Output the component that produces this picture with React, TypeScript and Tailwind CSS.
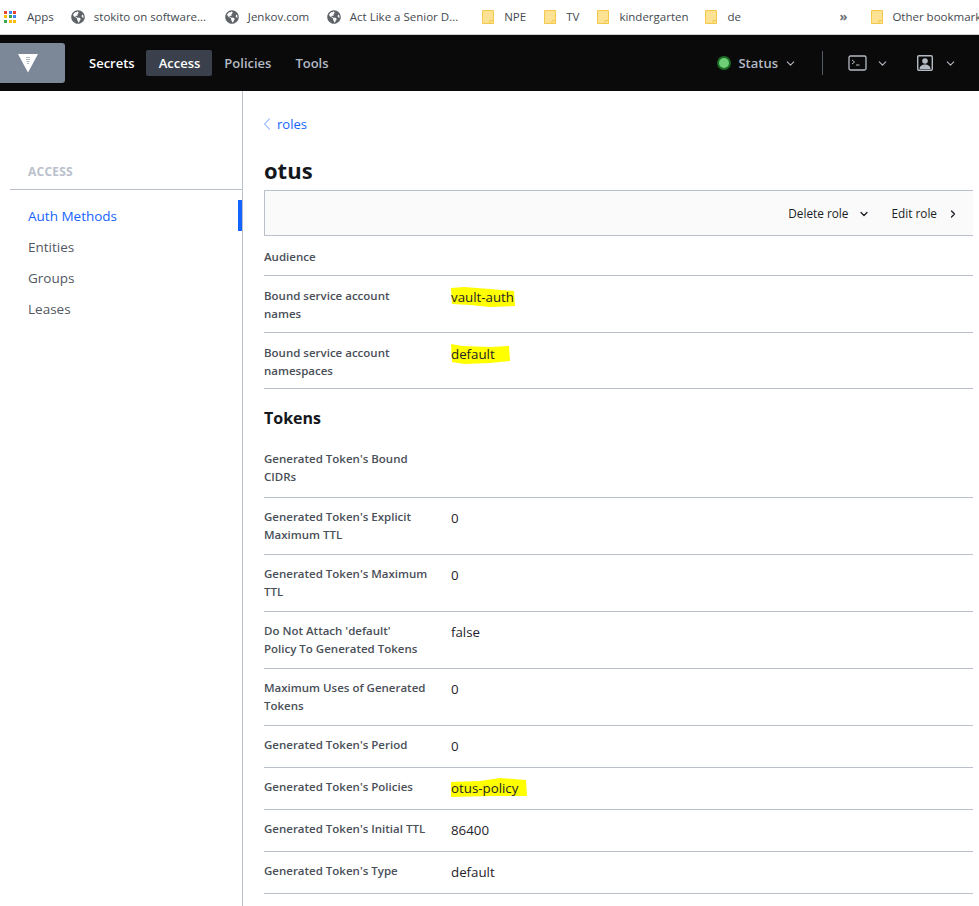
import { ChevronDown, ChevronLeft, ChevronRight } from 'lucide-react';
import { FaGlobeAmericas } from 'react-icons/fa';

const FONT = "font-['Open_Sans','Noto_Sans',sans-serif]";

interface Row {
  readonly label: string;
  readonly value?: string;
  readonly mark?: 'vault' | 'default' | 'policy';
}

const TOP_ROWS: Row[] = [
  { label: 'Audience' },
  { label: 'Bound service account names', value: 'vault-auth', mark: 'vault' },
  { label: 'Bound service account namespaces', value: 'default', mark: 'default' },
];

const TOKEN_ROWS: Row[] = [
  { label: "Generated Token's Bound CIDRs" },
  { label: "Generated Token's Explicit Maximum TTL", value: '0' },
  { label: "Generated Token's Maximum TTL", value: '0' },
  { label: "Do Not Attach 'default'\nPolicy To Generated Tokens", value: 'false' },
  { label: 'Maximum Uses of Generated Tokens', value: '0' },
  { label: "Generated Token's Period", value: '0' },
  { label: "Generated Token's Policies", value: 'otus-policy', mark: 'policy' },
  { label: "Generated Token's Initial TTL", value: '86400' },
  { label: "Generated Token's Type", value: 'default' },
];

// hand drawn marker strokes behind the values
const MARKS = {
  vault: { w: 66, h: 22, d: 'M1 2 L14 1 L40 3 L64 5 L65 20 L40 21 L20 19 L2 18 Z' },
  default: { w: 61, h: 22, d: 'M1 1 L12 3 L40 4 L59 3 L60 18 L40 20 L14 21 L2 19 Z' },
  policy: { w: 78, h: 21, d: 'M1 5 L30 4 L50 1 L76 3 L77 19 L40 19 L1 20 Z' },
};

function FolderIcon() {
  return (
    <svg width="12" height="14" viewBox="0 0 12 14" className="shrink-0">
      <path d="M.5.5h11v13H.5z" fill="#fde293" stroke="#f2c94c" />
      <path d="M8 13.500v-3h3.500" fill="none" stroke="#f2c94c" />
    </svg>
  );
}

function AppsIcon() {
  const colors = ['#ea4335', '#4285f4', '#ea4335', '#fbbc04', '#34a853', '#4285f4', '#34a853', '#fbbc04', '#fbbc04'];
  return (
    <div className="grid grid-cols-3 gap-[1px] w-[13px] h-[13px]">
      {colors.map((c, i) => (
        <span key={i} className="w-[3px] h-[3px]" style={{ backgroundColor: c }} />
      ))}
    </div>
  );
}

function Bookmarks() {
  return (
    <div className="flex items-center h-[35px] bg-white border-b border-[#d0d0d0] text-[11.5px] text-[#444a50] overflow-hidden whitespace-nowrap">
      <div className="ml-[4px]">
        <AppsIcon />
      </div>
      <span className="ml-[10px] w-[27px] mr-[17px]">Apps</span>
      <FaGlobeAmericas size={14} className="shrink-0 text-[#5f6368] mr-[9px]" />
      <span className="w-[111px] mr-[20px]">stokito on software...</span>
      <FaGlobeAmericas size={14} className="shrink-0 text-[#5f6368] mr-[9px]" />
      <span className="w-[61px] mr-[18px]">Jenkov.com</span>
      <FaGlobeAmericas size={14} className="shrink-0 text-[#5f6368] mr-[9px]" />
      <span className="w-[109px] mr-[24px]">Act Like a Senior D...</span>
      <FolderIcon />
      <span className="ml-[10px] w-[22px] mr-[18px]">NPE</span>
      <FolderIcon />
      <span className="ml-[10px] w-[14px] mr-[18px]">TV</span>
      <FolderIcon />
      <span className="ml-[10px] w-[68px] mr-[18px]">kindergarten</span>
      <FolderIcon />
      <span className="ml-[10px] w-[13px]">de</span>
      <span className="ml-[99px] text-[13px] font-bold text-[#6b7075]">»</span>
      <span className="ml-[11px] mr-[13px] w-px h-[16px] bg-[#d0d0d0]" />
      <FolderIcon />
      <span className="ml-[9px]">Other bookmarks</span>
    </div>
  );
}

function Navbar() {
  return (
    <div className="flex items-center h-[56px] bg-[#0a0a0b] text-[13px] font-semibold">
      <div className="flex items-center justify-center w-[65px] h-[40px] pr-[10px] rounded-r-[3px] bg-[#7c8797]">
        <svg width="20" height="20" viewBox="0 0 20 20">
          <path d="M0 1h20L10 19.500z" fill="#fff" />
          <path d="M8 4.500h4M8 6.500h4M8.500 8.500h3M9 10.500h2" stroke="#9aa3b0" strokeWidth="0.8" />
        </svg>
      </div>
      <span className="ml-[24px] pt-[2px] text-white">Secrets</span>
      <span className="ml-[11px] pl-[13px] pr-[12px] h-[26px] pt-[1px] flex items-center rounded-[2px] bg-[#3a414c] text-white">Access</span>
      <span className="ml-[12px] pt-[2px] text-[#b4bac4]">Policies</span>
      <span className="ml-[24px] pt-[2px] text-[#b4bac4]">Tools</span>
      <div className="ml-auto flex items-center text-[#b4bac4]">
        <span className="w-[14px] h-[14px] rounded-full bg-[#6fcf77] border-2 border-[#1c6b25]" />
        <span className="ml-[7px] pt-[2px]">Status</span>
        <ChevronDown size={13} strokeWidth={2} className="ml-[6px]" />
        <span className="ml-[25px] w-px h-[24px] bg-[#555b64]" />
        <svg width="19" height="16" viewBox="0 0 19 16" fill="none" className="ml-[25px]">
          <rect x="1" y="1" width="17" height="14" rx="1.500" stroke="#b4bac4" strokeWidth="1.300" />
          <path d="M4 5l2.500 2L4 9M8 10h3.500" stroke="#b4bac4" strokeWidth="1" />
        </svg>
        <ChevronDown size={13} strokeWidth={2} className="ml-[9px]" />
        <svg width="16" height="16" viewBox="0 0 16 16" className="ml-[28px]">
          <rect x="0.700" y="0.700" width="14.600" height="14.600" rx="1.200" fill="none" stroke="#b4bac4" strokeWidth="1.400" />
          <circle cx="8" cy="6" r="2.800" fill="#b4bac4" />
          <path d="M2.500 14c0-3 2.500-4.500 5.500-4.500s5.500 1.500 5.500 4.500z" fill="#b4bac4" />
        </svg>
        <ChevronDown size={13} strokeWidth={2} className="ml-[11px] mr-[22px]" />
      </div>
    </div>
  );
}

function Sidebar() {
  return (
    <aside className="w-[243px] shrink-0 border-r border-[#bac1cc] pt-[73px] pl-[10px]">
      <div className="pl-[18px] pb-[9px] border-b border-[#bac1cc] text-[12px] leading-[16px] font-bold tracking-[0.02em] text-[#bac1cc]">
        ACCESS
      </div>
      <nav className="mt-[10px] text-[13.500px]">
        <div className="flex items-center h-[31px] pl-[18px] pt-[2px] border-r-[4px] border-[#1563ff] text-[#1563ff]">Auth Methods</div>
        <div className="flex items-center h-[31px] pl-[18px] pt-[2px] text-[#525761]">Entities</div>
        <div className="flex items-center h-[31px] pl-[18px] pt-[2px] text-[#525761]">Groups</div>
        <div className="flex items-center h-[31px] pl-[18px] pt-[2px] text-[#525761]">Leases</div>
      </nav>
    </aside>
  );
}

function FieldRow({ row, pad }: { row: Row; pad: string }) {
  const mark = row.mark ? MARKS[row.mark] : null;
  return (
    <div className={`flex items-start border-b border-[#bac1cc] ${pad}`}>
      <div className="w-[187px] shrink-0 pr-[22px] whitespace-pre-line text-[11.500px] leading-[18px] font-semibold text-[#4a4f58]">{row.label}</div>
      {row.value && (
        <div className="relative text-[13.300px] leading-[21px] text-[#1f2329]">
          {mark && (
            <svg width={mark.w} height={mark.h} viewBox={`0 0 ${mark.w} ${mark.h}`} className="absolute left-[-1px] top-[-1px]">
              <path d={mark.d} fill="#ffff00" />
            </svg>
          )}
          <span className="relative">{row.value}</span>
        </div>
      )}
    </div>
  );
}

export default function App() {
  return (
    <div className={`h-[906px] overflow-hidden bg-white ${FONT}`}>
      <Bookmarks />
      <Navbar />
      <div className="flex h-[815px]">
        <Sidebar />
        <main className="flex-1 pl-[21px] pr-[6px]">
          <div className="flex items-center pt-[22px] h-[43px] text-[13px] leading-[18px] text-[#1563ff]">
            <ChevronLeft size={20} strokeWidth={1.500} className="ml-[-7px] text-[#a9c4fb]" />
            roles
          </div>
          <h1 className="mt-[21px] h-[35px] text-[22px] leading-[30px] font-bold text-[#14171c]">otus</h1>
          <div className="flex items-center justify-end h-[46px] pt-[1px] bg-[#fafafb] border-y border-[#bac1cc] border-l text-[11.800px] text-[#191d23]">
            <span>Delete role</span>
            <ChevronDown size={12} strokeWidth={2.500} className="ml-[10px]" />
            <span className="ml-[21px]">Edit role</span>
            <ChevronRight size={12} strokeWidth={2.500} className="ml-[10px] mr-[14px]" />
          </div>
          {TOP_ROWS.map((row, i) => (
            <FieldRow key={row.label} row={row} pad={i === 0 ? 'pt-[12px] pb-[9px]' : i === 2 ? 'pt-[11px] pb-[8px]' : 'pt-[11px] pb-[9px]'} />
          ))}
          <h2 className="pt-[16px] h-[51px] text-[16px] leading-[26px] font-bold text-[#14171c]">Tokens</h2>
          {TOKEN_ROWS.map((row, i) => (
            <FieldRow key={row.label} row={row} pad={i === 0 ? 'pt-[10px] pb-[11px]' : 'pt-[10px] pb-[10px]'} />
          ))}
        </main>
      </div>
    </div>
  );
}
